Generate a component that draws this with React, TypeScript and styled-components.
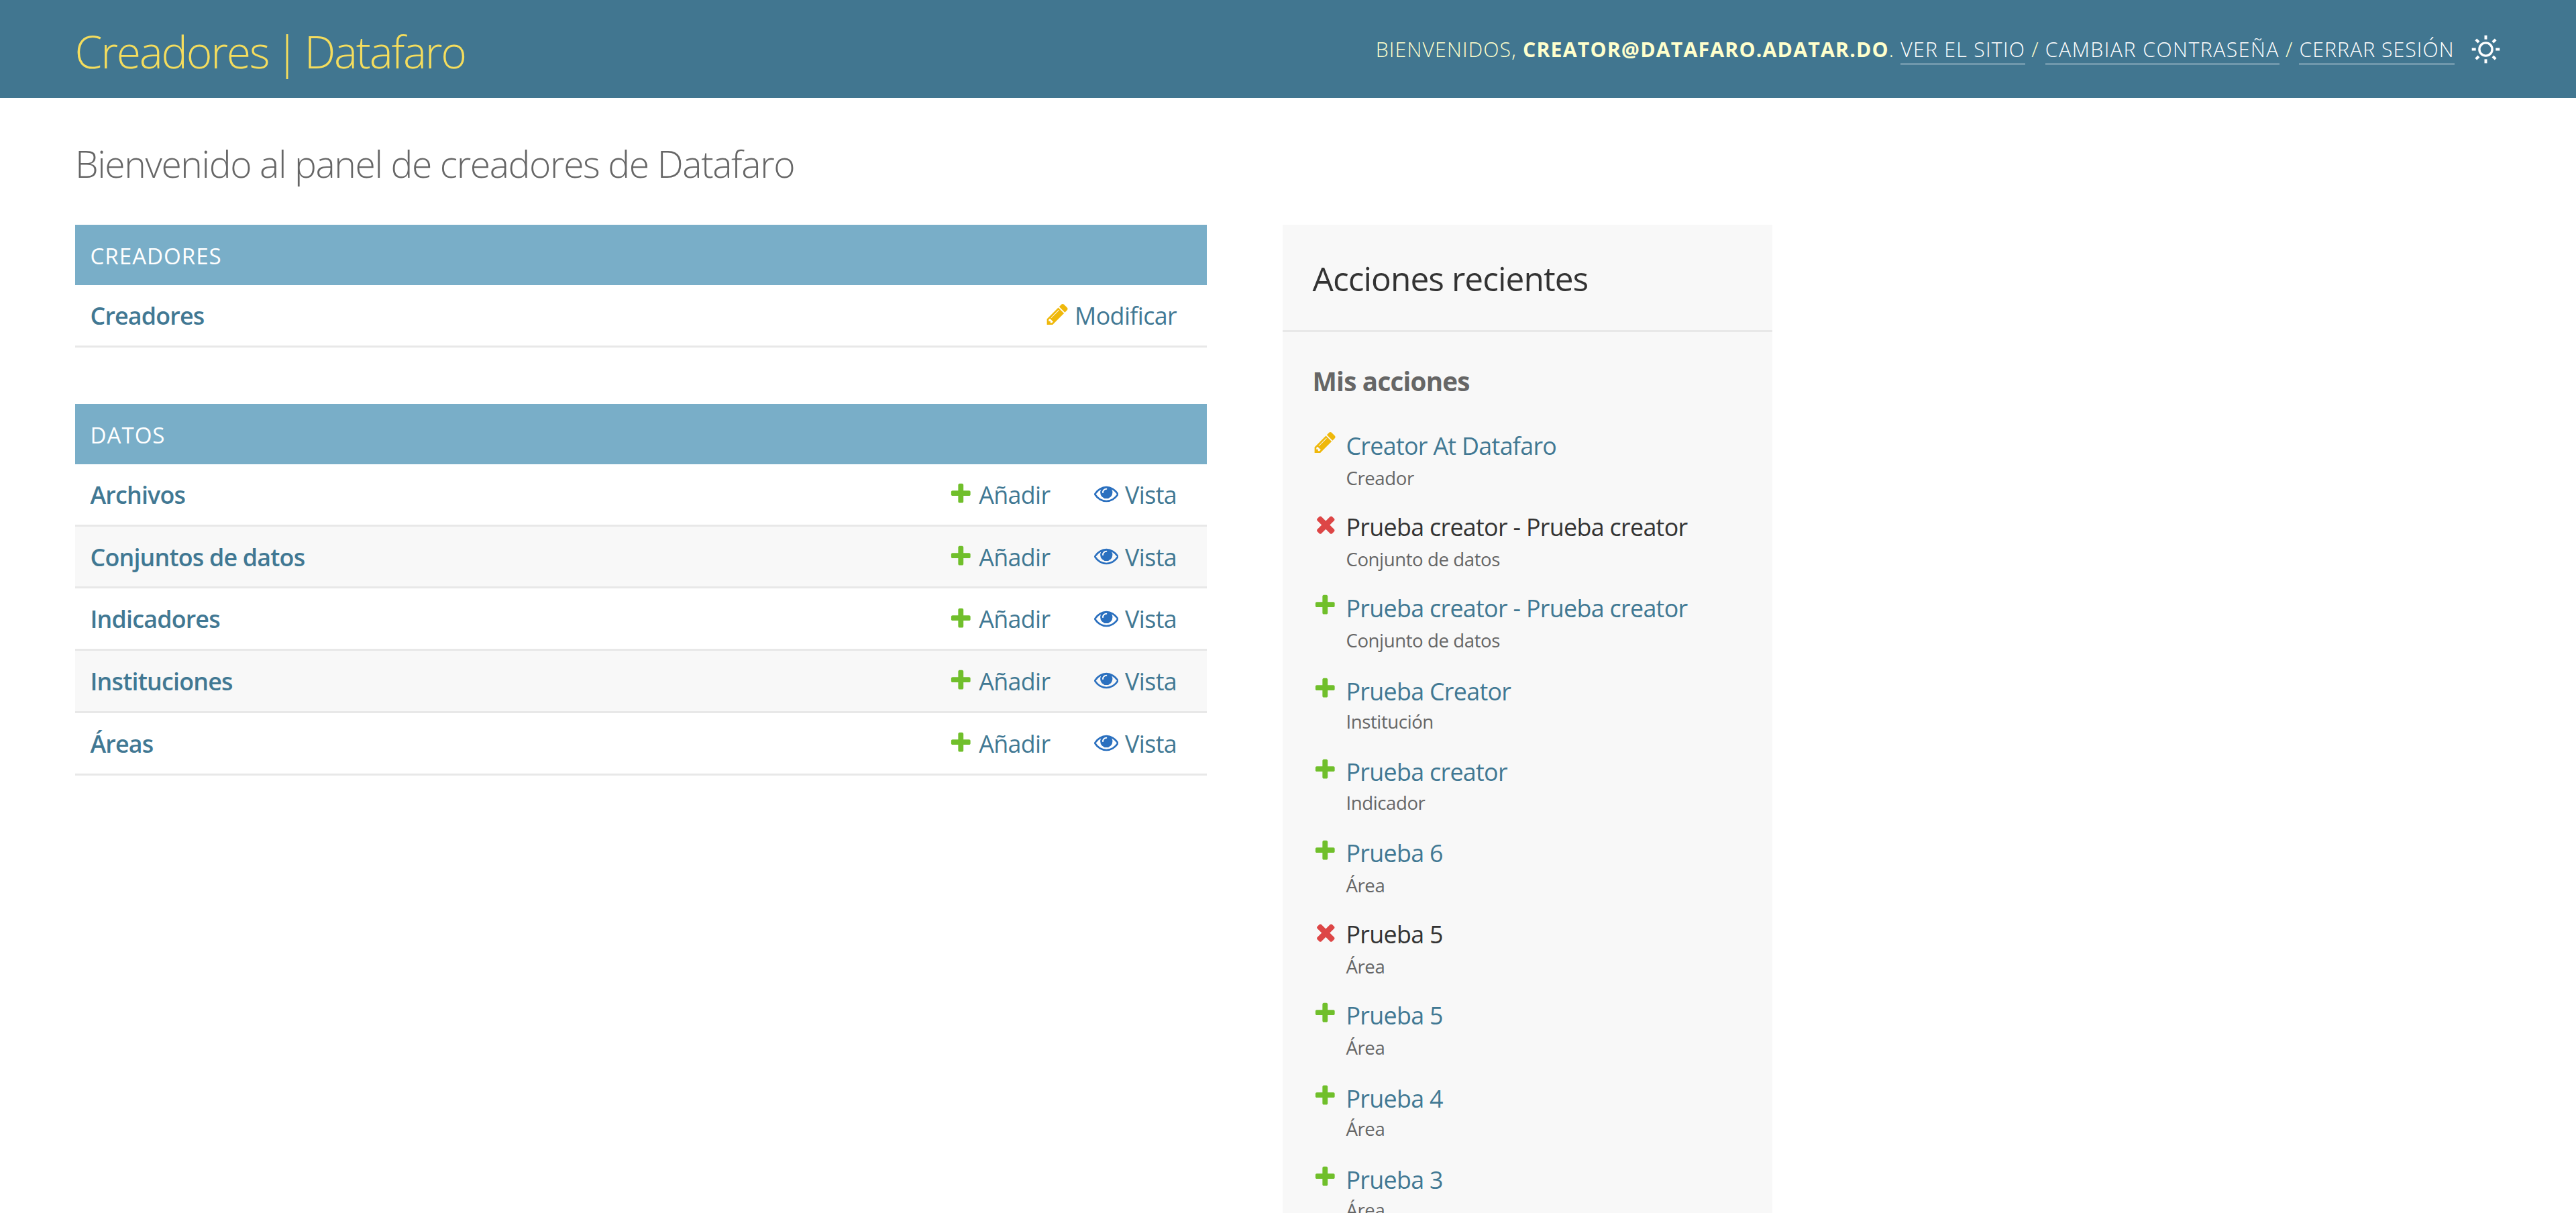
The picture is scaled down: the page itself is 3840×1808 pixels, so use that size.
import React from 'react';
import styled, { createGlobalStyle } from 'styled-components';

const GlobalStyle = createGlobalStyle`
  *, *::before, *::after { box-sizing: border-box; }
  html, body { margin: 0; padding: 0; background: #fff; overflow: hidden; }
  body { font-family: 'Open Sans', 'Noto Sans', sans-serif; color: #333; }
  h1, h2, h3, ul { margin: 0; padding: 0; font-weight: 400; }
  a { color: #417893; text-decoration: none; }
`;

const Page = styled.div`
  display: flex;
  flex-direction: column;
  height: 1808px;
  overflow: hidden;
`;

const Header = styled.header`
  display: flex;
  align-items: center;
  justify-content: space-between;
  flex: none;
  height: 146px;
  padding: 0 112.5px 0 111.5px;
  background: #417690;
  color: #ffc;
`;

const SiteName = styled.h1`
  padding-top: 6px;
  font-size: 66px;
  font-weight: 300;
  line-height: 90px;
  letter-spacing: -2.2px;
  word-spacing: -5px;
  white-space: nowrap;
  color: #f5dd5d;
`;

const UserTools = styled.div`
  display: flex;
  align-items: center;
  gap: 24px;
`;

const UserText = styled.div`
  padding-top: 1px;
  font-size: 30.3px;
  font-weight: 300;
  line-height: 42px;
  letter-spacing: 1.15px;
  text-transform: uppercase;
  white-space: nowrap;

  strong { font-weight: 700; }
`;

const HeaderLink = styled.a<{ $track?: number }>`
  color: #fff;
  letter-spacing: ${(p) => p.$track ?? 1.25}px;
  border-bottom: 3px solid rgba(255, 255, 255, 0.25);
`;

const Main = styled.main`
  display: flex;
  flex-direction: column;
  flex: 1;
  min-height: 0;
  padding: 58px 112px 0;
`;

const PageTitle = styled.h1`
  flex: none;
  margin-bottom: 51px;
  font-size: 55.2px;
  font-weight: 300;
  line-height: 80px;
  letter-spacing: -1.38px;
  white-space: nowrap;
  color: #666;
`;

const Columns = styled.div`
  display: flex;
  flex: 1;
  min-height: 0;
  gap: 112.5px;
`;

const Modules = styled.div`
  display: flex;
  flex-direction: column;
  gap: 84.4px;
  width: 1687px;
`;

const Caption = styled.h2`
  height: 89.8px;
  padding: 3px 22.5px 0;
  background: #79aec8;
  color: #fff;
  font-size: 33.1px;
  line-height: 88px;
  letter-spacing: 1px;
  text-transform: uppercase;
`;

const Row = styled.div<{ $shaded: boolean }>`
  display: flex;
  height: 92.8px;
  padding-left: 22.5px;
  border-bottom: 3px solid #e8e8e8;
  background: ${(p) => (p.$shaded ? '#f8f8f8' : '#fff')};
  font-size: 35.8px;
  line-height: 91.8px;
`;

const ModelName = styled.a`
  flex: 1;
  font-weight: 600;
  letter-spacing: -0.8px;
`;

const actionWidths = { add: 216.5, view: 168.5, change: 241.5 };
const actionGaps = { add: 8.6, view: 10, change: 8 };
type ActionKind = keyof typeof actionWidths;

const Action = styled.a<{ $kind: ActionKind }>`
  display: flex;
  gap: ${(p) => actionGaps[p.$kind]}px;
  width: ${(p) => actionWidths[p.$kind]}px;
  letter-spacing: -0.6px;

  svg { margin-top: 25.2px; }
`;

const Sidebar = styled.aside`
  width: 730.5px;
  background: #f8f8f8;
`;

const SidebarTitle = styled.h2`
  height: 160px;
  padding: 1.5px 45px 0;
  border-bottom: 3px solid #e8e8e8;
  font-size: 49.6px;
  line-height: 157px;
  letter-spacing: -0.95px;
`;

const SidebarSubtitle = styled.h3`
  margin: 42.6px 45px 42.3px;
  color: #666;
  font-size: 38.6px;
  font-weight: 700;
  line-height: 60px;
  letter-spacing: -0.75px;
`;

const ActionList = styled.ul`
  padding: 0 45px;
  list-style: none;
`;

const ActionItem = styled.li<{ $spaced?: boolean; $removed: boolean }>`
  display: flex;
  gap: 13.4px;
  height: 120.94px;
  margin-top: ${(p) => (p.$spaced ? 2.8 : 0)}px;

  > svg {
    margin-top: ${(p) => (p.$removed ? 2.6 : 1.5)}px;
  }
`;

const ItemText = styled.div`
  display: flex;
  flex-direction: column;
  font-size: 35.8px;
  line-height: 48px;
  letter-spacing: -0.68px;
  white-space: nowrap;
`;

const ItemKind = styled.span<{ $tight?: boolean }>`
  margin-top: ${(p) => (p.$tight ? -2.8 : 0)}px;
  color: #666;
  font-size: 27.6px;
  letter-spacing: -0.42px;
`;

const Glyph = styled.svg`
  flex: none;
  display: block;
  width: 36.56px;
  height: 36.56px;
`;

const SunGlyph = styled.svg`
  flex: none;
  display: block;
  width: 45px;
  height: 45px;
`;

const glyphs = {
  add: {
    box: '0 0 1792 1792',
    fill: '#70bf2b',
    d: 'M1600 796v192q0 40-28 68t-68 28h-416v416q0 40-28 68t-68 28h-192q-40 0-68-28t-28-68v-416h-416q-40 0-68-28t-28-68v-192q0-40 28-68t68-28h416v-416q0-40 28-68t68-28h192q40 0 68 28t28 68v416h416q40 0 68 28t28 68z',
  },
  change: {
    box: '0 0 1792 1792',
    fill: '#efb80b',
    d: 'M491 1536l91-91-235-235-91 91v107h128v128h107zm523-928q0-22-22-22-10 0-17 7l-542 542q-7 7-7 17 0 22 22 22 10 0 17-7l542-542q7-7 7-17zm-54-192l416 416-832 832h-416v-416zm683 96q0 53-37 90l-166 166-416-416 166-165q36-38 90-38 53 0 91 38l235 234q37 39 37 91z',
  },
  remove: {
    box: '29 79 1644 1644',
    fill: '#dd4646',
    d: 'M1490 1322q0 40-28 68l-136 136q-28 28-68 28t-68-28l-294-294-294 294q-28 28-68 28t-68-28l-136-136q-28-28-28-68t28-68l294-294-294-294q-28-28-28-68t28-68l136-136q28-28 68-28t68 28l294 294 294-294q28-28 68-28t68 28l136 136q28 28 28 68t-28 68l-294 294 294 294q28 28 28 68z',
  },
  view: {
    box: '0 0 1792 1792',
    fill: '#2b70bf',
    d: 'M1664 960q-152-236-381-353 61 104 61 225 0 185-131.5 316.5t-316.5 131.5-316.5-131.5-131.5-316.5q0-121 61-225-229 117-381 353 133 205 333.5 326.5t434.5 121.5 434.5-121.5 333.5-326.5zm-720-384q0-20-14-34t-34-14q-125 0-214.5 89.5t-89.5 214.5q0 20 14 34t34 14 34-14 14-34q0-86 61-147t147-61q20 0 34-14t14-34zm848 384q0 34-20 69-140 230-376.5 368.5t-499.5 138.5-499.5-139-376.5-368q-20-35-20-69t20-69q140-229 376.5-368t499.5-139 499.5 139 376.5 368q20 35 20 69z',
  },
};
type GlyphName = keyof typeof glyphs;

function Icon({ name }: { name: GlyphName }) {
  return (
    <Glyph viewBox={glyphs[name].box} aria-hidden="true">
      <path fill={glyphs[name].fill} d={glyphs[name].d} />
    </Glyph>
  );
}

function SunIcon() {
  return (
    <SunGlyph viewBox="0 0 45 45" fill="none" stroke="#fff" aria-hidden="true">
      <circle cx="22.5" cy="22.5" r="9.6" strokeWidth="3.4" />
      {[0, 45, 90, 135, 180, 225, 270, 315].map((angle) => (
        <path key={angle} d="M22.5 1.7v6" strokeWidth="4" transform={`rotate(${angle} 22.5 22.5)`} />
      ))}
    </SunGlyph>
  );
}

const actionLabels: Record<ActionKind, string> = { add: 'Añadir', view: 'Vista', change: 'Modificar' };

const modules: { title: string; models: string[]; actions: ActionKind[] }[] = [
  { title: 'Creadores', models: ['Creadores'], actions: ['change'] },
  {
    title: 'Datos',
    models: ['Archivos', 'Conjuntos de datos', 'Indicadores', 'Instituciones', 'Áreas'],
    actions: ['add', 'view'],
  },
];

interface Entry {
  icon: GlyphName;
  label: string;
  kind: string;
  spaced?: boolean;
  tight?: boolean;
}

const entries: Entry[] = [
  { icon: 'change', label: 'Creator At Datafaro', kind: 'Creador' },
  { icon: 'remove', label: 'Prueba creator - Prueba creator', kind: 'Conjunto de datos' },
  { icon: 'add', label: 'Prueba creator - Prueba creator', kind: 'Conjunto de datos' },
  { icon: 'add', label: 'Prueba Creator', kind: 'Institución', spaced: true, tight: true },
  { icon: 'add', label: 'Prueba creator', kind: 'Indicador', tight: true },
  { icon: 'add', label: 'Prueba 6', kind: 'Área' },
  { icon: 'remove', label: 'Prueba 5', kind: 'Área' },
  { icon: 'add', label: 'Prueba 5', kind: 'Área' },
  { icon: 'add', label: 'Prueba 4', kind: 'Área', spaced: true, tight: true },
  { icon: 'add', label: 'Prueba 3', kind: 'Área', tight: true },
];

export default function App() {
  return (
    <Page>
      <GlobalStyle />
      <Header>
        <SiteName>Creadores | Datafaro</SiteName>
        <UserTools>
          <UserText>
            Bienvenidos, <strong>creator@datafaro.adatar.do</strong>.{' '}
            <HeaderLink>Ver el sitio</HeaderLink> / <HeaderLink $track={1.45}>Cambiar contraseña</HeaderLink> /{' '}
            <HeaderLink $track={1}>Cerrar sesión</HeaderLink>
          </UserText>
          <SunIcon />
        </UserTools>
      </Header>
      <Main>
        <PageTitle>Bienvenido al panel de creadores de Datafaro</PageTitle>
        <Columns>
          <Modules>
            {modules.map((module) => (
              <section key={module.title}>
                <Caption>{module.title}</Caption>
                {module.models.map((model, i) => (
                  <Row key={model} $shaded={i % 2 === 1}>
                    <ModelName>{model}</ModelName>
                    {module.actions.map((kind) => (
                      <Action key={kind} $kind={kind}>
                        <Icon name={kind} />
                        {actionLabels[kind]}
                      </Action>
                    ))}
                  </Row>
                ))}
              </section>
            ))}
          </Modules>
          <Sidebar>
            <SidebarTitle>Acciones recientes</SidebarTitle>
            <SidebarSubtitle>Mis acciones</SidebarSubtitle>
            <ActionList>
              {entries.map((entry, i) => (
                <ActionItem key={i} $spaced={entry.spaced} $removed={entry.icon === 'remove'}>
                  <Icon name={entry.icon} />
                  <ItemText>
                    {entry.icon === 'remove' ? <span>{entry.label}</span> : <a>{entry.label}</a>}
                    <ItemKind $tight={entry.tight}>{entry.kind}</ItemKind>
                  </ItemText>
                </ActionItem>
              ))}
            </ActionList>
          </Sidebar>
        </Columns>
      </Main>
    </Page>
  );
}
